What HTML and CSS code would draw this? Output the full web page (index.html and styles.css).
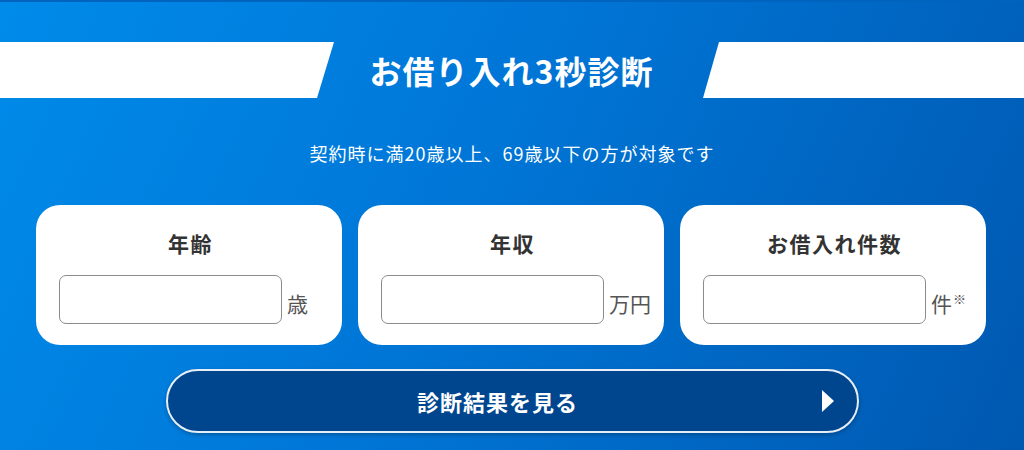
FILE: index.html
```html
<!DOCTYPE html>
<html lang="ja">
<head>
<meta charset="utf-8">
<title>お借り入れ3秒診断</title>
<link rel="stylesheet" href="styles.css">
</head>
<body>
<div class="page">
  <div class="banner">
    <div class="band band-left"></div>
    <h1 class="title">お借り入れ3秒診断</h1>
    <div class="band band-right"></div>
  </div>
  <p class="note">契約時に満20歳以上、69歳以下の方が対象です</p>
  <div class="cards">
    <div class="card">
      <div class="card-title">年齢</div>
      <div class="field">
        <input class="input" type="text">
        <span class="unit">歳</span>
      </div>
    </div>
    <div class="card">
      <div class="card-title">年収</div>
      <div class="field">
        <input class="input" type="text">
        <span class="unit">万円</span>
      </div>
    </div>
    <div class="card">
      <div class="card-title">お借入れ件数</div>
      <div class="field">
        <input class="input" type="text">
        <span class="unit">件<sup class="mark">※</sup></span>
      </div>
    </div>
  </div>
  <div class="actions">
    <button class="submit" type="button">診断結果を見る<span class="arrow"></span></button>
  </div>
</div>
</body>
</html>
```
FILE: styles.css
```css
* { box-sizing: border-box; }
html, body { margin: 0; padding: 0; }
body {
  width: 1024px;
  height: 450px;
  overflow: hidden;
  font-family: "Noto Sans CJK JP", "Noto Sans", sans-serif;
  background: linear-gradient(115deg, #008be9 0%, #0076d7 45%, #0058b0 100%);
  border-top: 2px solid #0063bd;
}
.page {
  padding-top: 40px;
}
.banner {
  display: flex;
  height: 56px;
  align-items: stretch;
}
.band {
  background: #fff;
}
.band-left {
  width: 334px;
  clip-path: polygon(0 0, 100% 0, calc(100% - 17px) 100%, 0 100%);
}
.band-right {
  width: 321px;
  clip-path: polygon(16px 0, 100% 0, 100% 100%, 0 100%);
}
.title {
  flex: 1;
  margin: 0;
  padding-right: 14px;
  display: flex;
  align-items: center;
  justify-content: center;
  color: #fff;
  font-size: 32px;
  font-weight: 700;
  letter-spacing: 1px;
  line-height: 1;
}
.note {
  margin: 43px 0 0;
  text-align: center;
  color: #fff;
  font-size: 18px;
  line-height: 24px;
  letter-spacing: 1px;
}
.cards {
  display: flex;
  gap: 16px;
  padding: 0 38px 0 36px;
  margin-top: 40px;
}
.card {
  width: 306px;
  height: 140px;
  background: #fff;
  border-radius: 24px;
  padding: 25px 0 0 23px;
}
.card-title {
  color: #333;
  font-size: 21px;
  font-weight: 700;
  line-height: 26px;
  text-align: center;
  padding-right: 20px;
  letter-spacing: 1.5px;
}
.field {
  display: flex;
  align-items: flex-end;
  gap: 5px;
  margin-top: 19px;
}
.input {
  width: 223px;
  height: 49px;
  border: 1px solid #8c8c8c;
  border-radius: 7px;
  background: #fff;
  margin: 0;
  padding: 0 8px;
  font: inherit;
}
.unit {
  color: #555;
  font-size: 21px;
  line-height: 30px;
  margin-bottom: 6px;
  white-space: nowrap;
}
.mark {
  font-size: 13px;
  line-height: 0;
  vertical-align: 8px;
  margin-left: 1px;
}
.actions {
  display: flex;
  justify-content: center;
  margin-top: 24px;
  padding-left: 1px;
}
.submit {
  position: relative;
  width: 693px;
  height: 64px;
  border-radius: 32px;
  border: 2px solid #e6eef8;
  background: #00468f;
  box-shadow: 0 2px 4px rgba(0,0,0,0.25);
  color: #fff;
  font-family: inherit;
  font-size: 22px;
  font-weight: 700;
  letter-spacing: 1px;
  padding: 0 30px 0 0;
  cursor: pointer;
}
.arrow {
  position: absolute;
  right: 23px;
  top: 50%;
  margin-top: -11px;
  width: 0;
  height: 0;
  border-top: 11px solid transparent;
  border-bottom: 11px solid transparent;
  border-left: 12px solid #fff;
}
```
